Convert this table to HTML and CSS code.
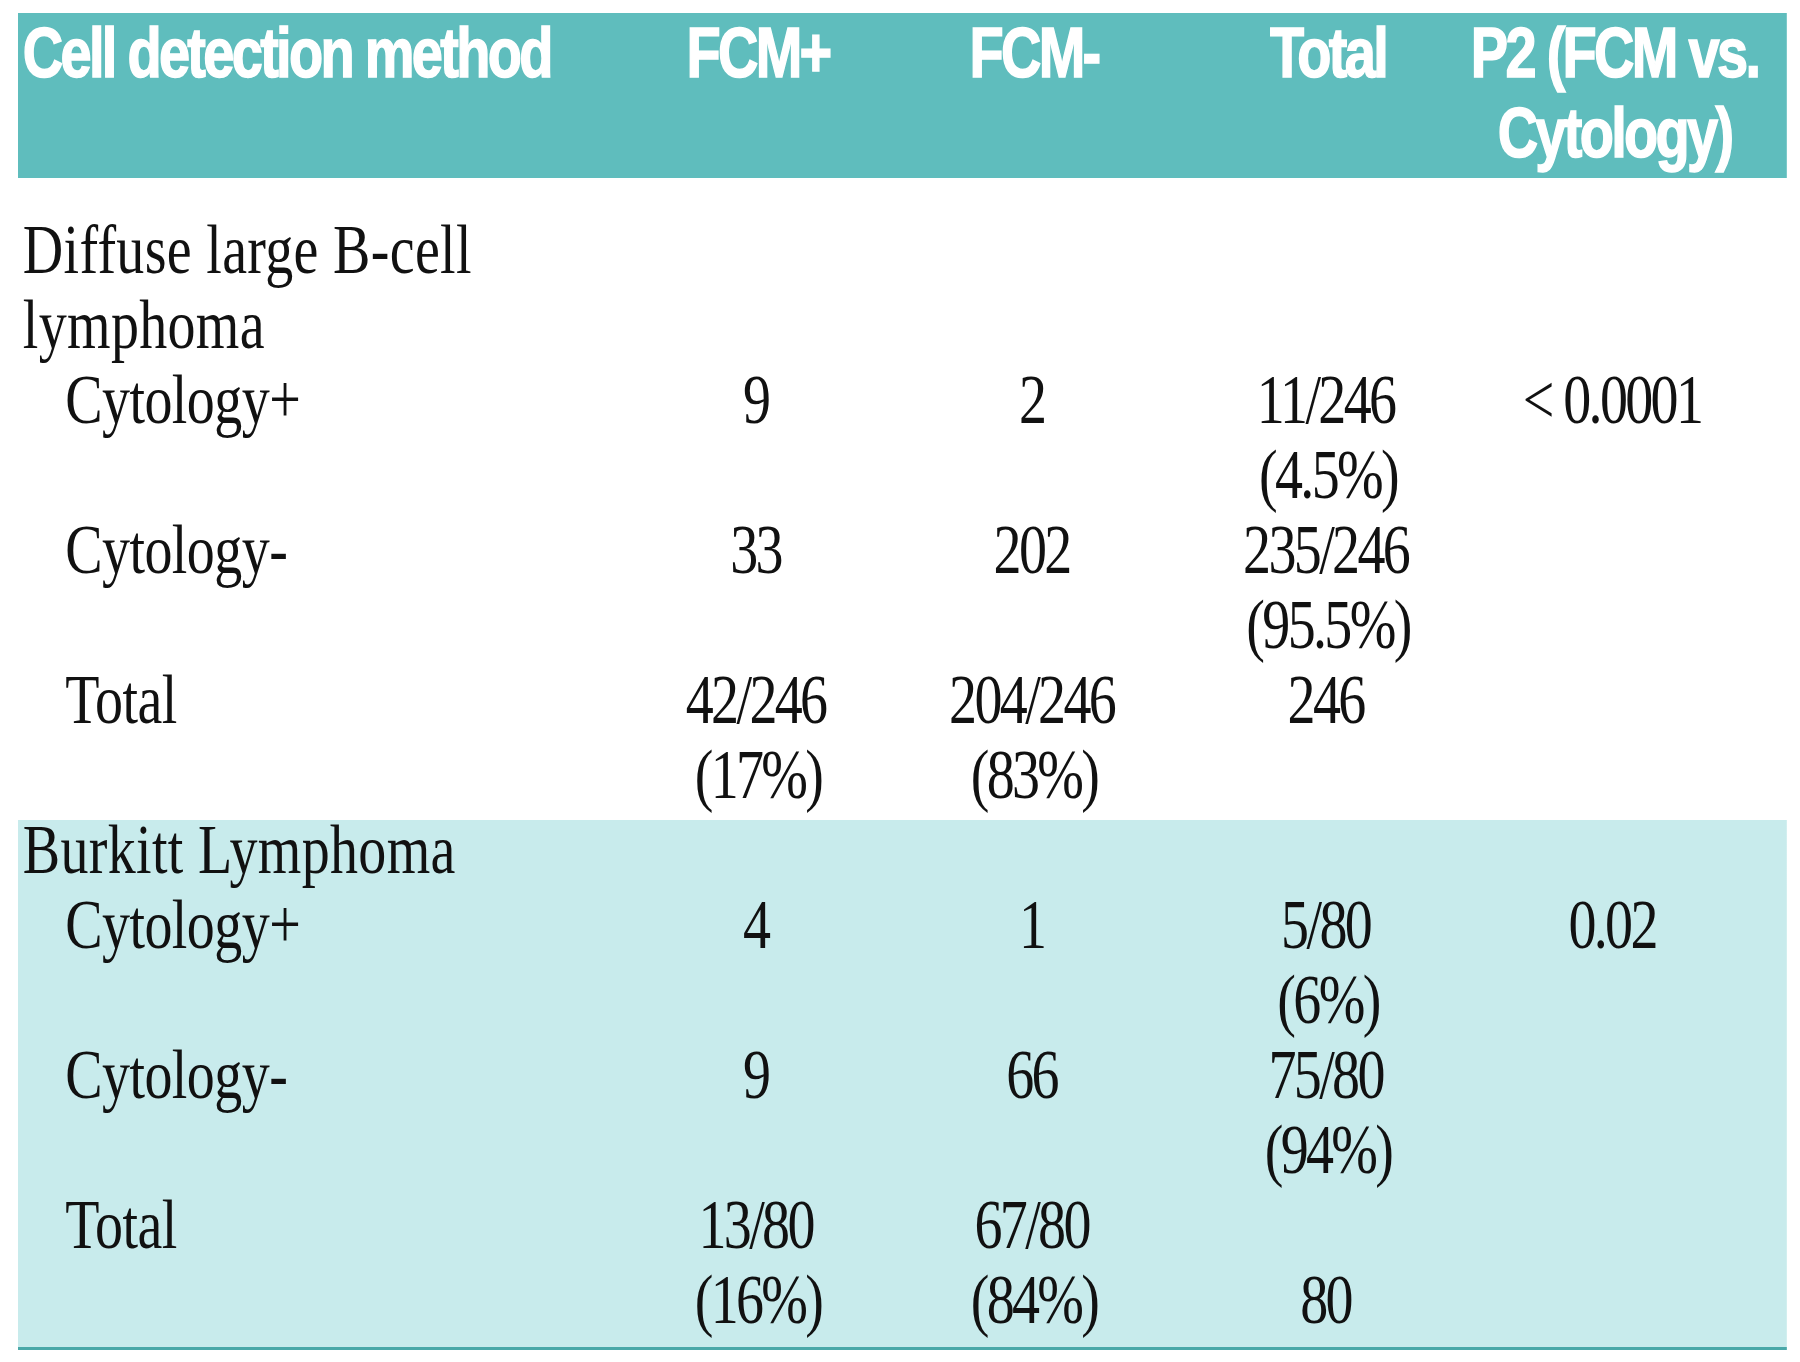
FILE: index.html
```html
<!DOCTYPE html>
<html lang="en">
<head>
<meta charset="utf-8">
<title>Cell detection method: FCM vs. cytology</title>
<link rel="stylesheet" href="styles.css">
</head>
<body>
<div class="page">
  <table class="results">
    <colgroup>
      <col class="c-label">
      <col class="c-pos">
      <col class="c-neg">
      <col class="c-total">
      <col class="c-p">
    </colgroup>
    <thead>
      <tr>
        <th class="lbl">Cell detection method</th>
        <th>FCM+</th>
        <th>FCM-</th>
        <th>Total</th>
        <th class="p">P2 (FCM vs.<br>Cytology)</th>
      </tr>
    </thead>
    <tbody class="dlbcl">
      <tr class="lead">
        <td class="lbl">Diffuse large B-cell<br>lymphoma</td>
        <td></td><td></td><td></td><td class="p"></td>
      </tr>
      <tr>
        <td class="lbl sub">Cytology+</td>
        <td>9</td>
        <td>2</td>
        <td>11/246<br>(4.5%)</td>
        <td class="p">&lt; 0.0001</td>
      </tr>
      <tr>
        <td class="lbl sub">Cytology-</td>
        <td>33</td>
        <td>202</td>
        <td>235/246<br>(95.5%)</td>
        <td class="p"></td>
      </tr>
      <tr>
        <td class="lbl sub">Total</td>
        <td>42/246<br>(17%)</td>
        <td>204/246<br>(83%)</td>
        <td>246</td>
        <td class="p"></td>
      </tr>
    </tbody>
    <tbody class="burkitt">
      <tr class="lead">
        <td class="lbl">Burkitt Lymphoma</td>
        <td></td><td></td><td></td><td class="p"></td>
      </tr>
      <tr>
        <td class="lbl sub">Cytology+</td>
        <td>4</td>
        <td>1</td>
        <td>5/80<br>(6%)</td>
        <td class="p">0.02</td>
      </tr>
      <tr>
        <td class="lbl sub">Cytology-</td>
        <td>9</td>
        <td>66</td>
        <td>75/80<br>(94%)</td>
        <td class="p"></td>
      </tr>
      <tr class="last">
        <td class="lbl sub">Total</td>
        <td>13/80<br>(16%)</td>
        <td>67/80<br>(84%)</td>
        <td class="bottom">80</td>
        <td class="p"></td>
      </tr>
    </tbody>
  </table>
</div>
</body>
</html>
```

FILE: styles.css
```css
html, body {
  margin: 0;
  padding: 0;
  background: #ffffff;
}

.page {
  box-sizing: border-box;
  height: 1362px;
  padding: 13px 0 0 18px;
  overflow: hidden;
}

/* The source table is set in a condensed face: the whole table is
   laid out at natural width and compressed horizontally (4/5). */
.results {
  width: 2211.25px;
  table-layout: fixed;
  border-collapse: separate;
  border-spacing: 0;
  transform: scaleX(0.8);
  transform-origin: 0 0;
}

col.c-label { width: 780px; }
col.c-pos   { width: 290px; }
col.c-neg   { width: 400px; }
col.c-total { width: 335px; }
col.c-p     { width: 406.25px; }

.results th,
.results td {
  padding: 0;
  vertical-align: top;
  white-space: nowrap;
  text-align: center;
}

.results thead th {
  background: #5fbdbd;
  color: #ffffff;
  font-family: "Liberation Sans", Arial, sans-serif;
  font-weight: 700;
  font-size: 70px;
  line-height: 80px;
  letter-spacing: -3.4px;
  -webkit-text-stroke: 1.5px #ffffff;
  padding-bottom: 5px;
}

.results td {
  font-family: "Liberation Serif", "Times New Roman", serif;
  font-size: 70px;
  line-height: 75px;
  color: #111111;
  letter-spacing: -3.3px;
  text-indent: -6px;
}

.results .lbl {
  text-align: left;
  padding-left: 6px;
}

.results td.lbl {
  letter-spacing: 0.4px;
  text-indent: 0;
}

.results td.sub {
  padding-left: 59px;
  letter-spacing: -0.7px;
}

.results .p {
  padding-right: 25px;
}

.dlbcl .lead td {
  padding-top: 34px;
}

.burkitt td {
  background: #c8ebec;
}

.burkitt .lead td {
  background: linear-gradient(to bottom, transparent 0 8px, #c8ebec 8px);
}

.burkitt .last td {
  padding-bottom: 10px;
  border-bottom: 3px solid #4aa8a8;
}

.results td.bottom {
  vertical-align: bottom;
}
```
